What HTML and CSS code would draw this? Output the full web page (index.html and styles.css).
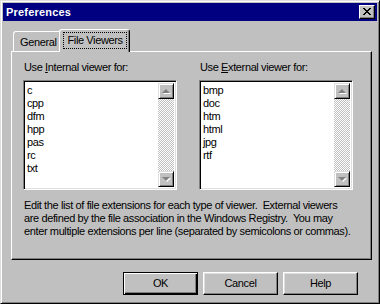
FILE: index.html
```html
<!DOCTYPE html>
<html>
<head>
<meta charset="utf-8">
<link rel="stylesheet" href="styles.css">
</head>
<body>
<div class="window">
  <div class="titlebar">
    <span class="title">Preferences</span>
    <span class="close">
      <svg width="8" height="7" viewBox="0 0 8 7"><path d="M0 0h2v1h1v1h2v-1h1v-1h2v1h-1v1h-1v1h-1v1h1v1h1v1h1v1h-2v-1h-1v-1h-2v1h-1v1h-2v-1h1v-1h1v-1h1v-1h-1v-1h-1v-1h-1z" fill="#000"/></svg>
    </span>
  </div>
  <div class="tabs">
    <div class="tab">General</div>
    <div class="tab active"><span class="focus">File Viewers</span></div>
  </div>
  <div class="panel">
    <div class="lists">
      <div class="group">
        <div class="label">Use <u>I</u>nternal viewer for:</div>
        <div class="listbox">
          <div class="items">
            <div>c</div><div>cpp</div><div>dfm</div><div>hpp</div><div>pas</div><div>rc</div><div>txt</div>
          </div>
          <div class="scrollbar">
            <div class="sbtn"><span class="arrow up"></span></div>
            <div class="track"></div>
            <div class="sbtn"><span class="arrow down"></span></div>
          </div>
        </div>
      </div>
      <div class="group">
        <div class="label">Use <u>E</u>xternal viewer for:</div>
        <div class="listbox">
          <div class="items">
            <div>bmp</div><div>doc</div><div>htm</div><div>html</div><div>jpg</div><div>rtf</div>
          </div>
          <div class="scrollbar">
            <div class="sbtn"><span class="arrow up"></span></div>
            <div class="track"></div>
            <div class="sbtn"><span class="arrow down"></span></div>
          </div>
        </div>
      </div>
    </div>
    <p class="desc">Edit the list of file extensions for each type of viewer.&nbsp; External viewers<br>are defined by the file association in the Windows Registry.&nbsp; You may<br>enter multiple extensions per line (separated by semicolons or commas).</p>
  </div>
  <div class="buttons">
    <div class="btn default"><span>OK</span></div>
    <div class="btn"><span>Cancel</span></div>
    <div class="btn"><span>Help</span></div>
  </div>
</div>
</body>
</html>
```

FILE: styles.css
```css
html, body {
  margin: 0;
  padding: 0;
  background: #c0c0c0;
}
.window {
  box-sizing: border-box;
  width: 380px;
  height: 304px;
  background: #c0c0c0;
  border: 1px solid;
  border-color: #dfdfdf #000 #000 #dfdfdf;
  box-shadow: inset 1px 1px #fff, inset -1px -1px #808080;
  padding: 2px;
  font-family: "Liberation Sans", Arial, sans-serif;
  font-size: 11px;
  letter-spacing: -0.38px;
  color: #000;
  display: flex;
  flex-direction: column;
}
.titlebar {
  height: 18px;
  background: #000080;
  color: #fff;
  display: flex;
  align-items: center;
  justify-content: space-between;
  padding: 0 2px 0 3px;
}
.title {
  font-weight: bold;
  font-size: 11px;
  letter-spacing: 0.2px;
}
.close {
  box-sizing: border-box;
  width: 16px;
  height: 14px;
  background: #c0c0c0;
  border: 1px solid;
  border-color: #fff #000 #000 #fff;
  box-shadow: inset -1px -1px #808080;
  display: flex;
  align-items: center;
  justify-content: center;
  padding: 0 1px 1px 0;
}
.close svg { display: block; }
.tabs {
  display: flex;
  align-items: flex-end;
  margin: 7px 0 0 8px;
  padding-left: 2px;
  height: 23px;
}
.tab {
  box-sizing: border-box;
  height: 20px;
  padding: 4px 5px 0 6px;
  border-top: 1px solid #fff;
  border-left: 1px solid #fff;
  border-right: 1px solid #000;
  box-shadow: inset -1px 0 #808080;
  border-radius: 3px 3px 0 0;
  background: #c0c0c0;
}
.tab.active {
  height: 23px;
  margin: 0 0 -1px -3px;
  padding: 3px 3px 0 4px;
  position: relative;
  z-index: 1;
}
.focus {
  display: inline-block;
  outline: 1px dotted #000;
  outline-offset: 0;
  padding: 0 3px 1px 3px;
  line-height: 14px;
}
.panel {
  box-sizing: border-box;
  width: 361px;
  height: 209px;
  margin-left: 8px;
  border: 1px solid;
  border-color: #fff #000 #000 #fff;
  box-shadow: inset -1px -1px #808080;
  padding: 9px 17px 0 11px;
}
.lists {
  display: flex;
  gap: 22px;
}
.group {
  width: 154px;
}
.label {
  line-height: 13px;
  padding-left: 1px;
  margin-bottom: 6px;
}
.listbox {
  box-sizing: border-box;
  width: 154px;
  height: 110px;
  border: 1px solid;
  border-color: #808080 #fff #fff #808080;
  box-shadow: inset 1px 1px #000, inset -1px -1px #dfdfdf;
  padding: 2px;
  background: #fff;
  display: flex;
}
.items {
  flex: 1;
  padding: 1px 0 0 1px;
  line-height: 13px;
}
.scrollbar {
  width: 16px;
  display: flex;
  flex-direction: column;
}
.sbtn {
  box-sizing: border-box;
  width: 16px;
  height: 16px;
  background: #c0c0c0;
  border: 1px solid;
  border-color: #dfdfdf #000 #000 #dfdfdf;
  box-shadow: inset 1px 1px #fff, inset -1px -1px #808080;
  display: flex;
  align-items: center;
  justify-content: center;
}
.arrow {
  width: 0;
  height: 0;
  border-left: 4px solid transparent;
  border-right: 4px solid transparent;
  filter: drop-shadow(1px 1px 0 #fff);
}
.arrow.up { border-bottom: 4px solid #808080; }
.arrow.down { border-top: 4px solid #808080; }
.track {
  flex: 1;
  background-color: #c0c0c0;
  background-image: conic-gradient(#fff 25%, #c0c0c0 0 50%, #fff 0 75%, #c0c0c0 0);
  background-size: 2px 2px;
}
.desc {
  margin: 9px 0 0 1px;
  line-height: 13px;
  white-space: nowrap;
}
.buttons {
  display: flex;
  justify-content: flex-end;
  gap: 5px;
  margin: 12px 19px 0 0;
}
.btn {
  box-sizing: border-box;
  width: 75px;
  height: 23px;
  background: #c0c0c0;
  border: 1px solid;
  border-color: #fff #000 #000 #fff;
  box-shadow: inset -1px -1px #808080, inset 1px 1px #dfdfdf;
  display: flex;
  align-items: center;
  justify-content: center;
}
.btn.default {
  border: 1px solid #000;
  box-shadow: inset 1px 1px #fff, inset -1px -1px #000, inset -2px -2px #808080;
}
.btn span { padding-bottom: 1px; }
```
